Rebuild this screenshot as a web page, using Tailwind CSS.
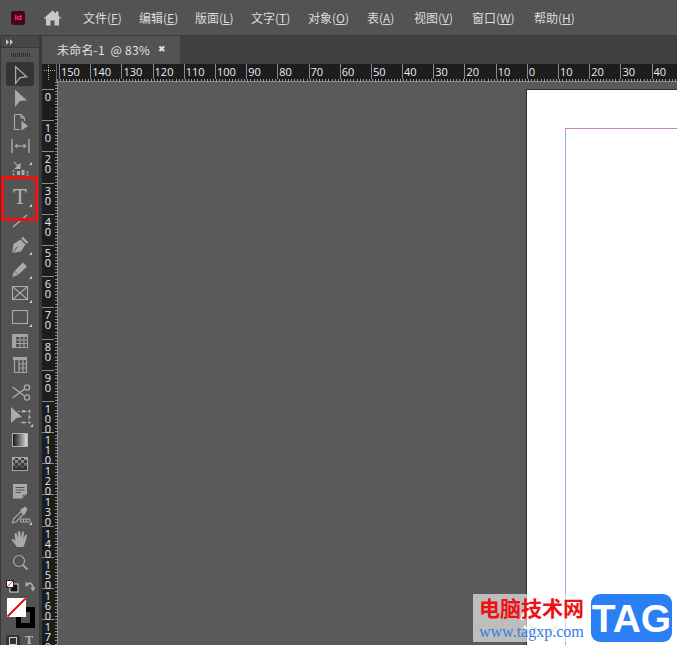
<!DOCTYPE html>
<html lang="zh">

<head>
    <meta charset="utf-8">
    <title>InDesign</title>
    <script src="https://cdn.jsdelivr.net/npm/@tailwindcss/browser@4"></script>
</head>

<body class="bg-[#535353]">
    <div class="relative w-[677px] h-[645px] overflow-hidden flex flex-col font-['Noto_Sans_CJK_SC','Noto_Sans',sans-serif]">
        <!-- Menu bar -->
        <div class="h-[36px] shrink-0 flex items-center bg-[#535353] border-b border-[#3c3c3c] text-[12px] text-[#dcdcdc]">
            <div class="ml-[11px] w-[14px] h-[14px] rounded-[3px] bg-[#49021f] flex items-center justify-center text-[8px] font-bold text-[#ff3a78] font-['Liberation_Sans',sans-serif]">Id</div>
            <svg class="ml-[18px] w-[19px] h-[16px]" viewBox="0 0 19 16">
                <path d="M9.5 0.5 L0.5 8.5 H3 V15.5 H7.5 V10.5 H11.5 V15.5 H16 V8.5 H18.5 L15.5 5.8 V1.5 H13 V3.6 Z" fill="#c8c8c8" />
            </svg>
            <div class="ml-[21px] flex whitespace-nowrap">
                <span class="w-[56px]">文件(<span class="underline">F</span>)</span>
                <span class="w-[56px]">编辑(<span class="underline">E</span>)</span>
                <span class="w-[56px]">版面(<span class="underline">L</span>)</span>
                <span class="w-[57px]">文字(<span class="underline">T</span>)</span>
                <span class="w-[59px]">对象(<span class="underline">O</span>)</span>
                <span class="w-[47px]">表(<span class="underline">A</span>)</span>
                <span class="w-[58px]">视图(<span class="underline">V</span>)</span>
                <span class="w-[62px]">窗口(<span class="underline">W</span>)</span>
                <span>帮助(<span class="underline">H</span>)</span>
            </div>
        </div>

        <div class="flex-1 flex min-h-0">
            <!-- Tools panel -->
            <div class="w-[42px] shrink-0 bg-[#3a3a3a] pl-px pr-[3px] flex flex-col">
                <div class="h-[11px] shrink-0 bg-[#474747] flex items-center pl-[5px]">
                    <svg class="w-[8px] h-[6px]" viewBox="0 0 8 6">
                        <path d="M0 0 L3 3 L0 6 Z M4 0 L7 3 L4 6 Z" fill="#c4c4c4" />
                    </svg>
                </div>
                <div class="flex-1 mt-px bg-[#535353] flex flex-col items-center">
                    <div class="h-[14px] shrink-0 flex items-center">
                        <div class="w-[19px] h-[4px] bg-[repeating-linear-gradient(90deg,#2e2e2e_0,#2e2e2e_1px,transparent_1px,transparent_2px)]"></div>
                    </div>
                    <!-- selection -->
                    <svg class="w-[28px] h-[24px] shrink-0 bg-[#343434] rounded-[3px]" viewBox="0 0 28 24">
                        <path d="M9.6 4.7 L20.7 14.7 L14 15.7 L9.6 21.3 Z" fill="none" stroke="#a8a8a8" stroke-width="1.3" />
                    </svg>
                    <!-- direct selection -->
                    <svg class="w-[28px] h-[24px] shrink-0" viewBox="0 0 28 24">
                        <path d="M9 3.5 L21 14.5 L14 15 L9 21 Z" fill="#aaaaaa" />
                    </svg>
                    <!-- page -->
                    <svg class="w-[28px] h-[24px] shrink-0" viewBox="0 0 28 24">
                        <path d="M8.5 4.5 H15 L18.5 8 V11 M8.5 4.5 V19.5 H14 M15 4.5 V8 H18.5" fill="none" stroke="#aaaaaa" stroke-width="1.2" />
                        <path d="M15.5 11 L22 16 L15.5 20.5 Z" fill="#aaaaaa" />
                    </svg>
                    <!-- gap -->
                    <svg class="w-[28px] h-[24px] shrink-0" viewBox="0 0 28 24">
                        <path d="M6 5 V19 M23 5 V19" stroke="#aaaaaa" stroke-width="1.4" />
                        <path d="M9 12 H20" stroke="#aaaaaa" stroke-width="1.2" />
                        <path d="M8.5 12 L11.5 9.5 V14.5 Z M20.5 12 L17.5 9.5 V14.5 Z" fill="#aaaaaa" />
                    </svg>
                    <!-- content collector -->
                    <svg class="w-[28px] h-[24px] shrink-0" viewBox="0 0 28 24">
                        <path d="M8 4 L13 9 M14 6 V10.5 H9.5 Z" fill="#aaaaaa" stroke="#aaaaaa" stroke-width="1.2" />
                        <path d="M7.5 12 V19.5 H21.5 V12" fill="none" stroke="#aaaaaa" stroke-width="1.6" stroke-dasharray="2 1.2" />
                        <path d="M11 13 H14 V17 H11 Z M15.5 12 H18.5 V17 H15.5 Z" fill="#aaaaaa" />
                        <path d="M26 4 V7 H23 Z" fill="#cccccc" />
                    </svg>
                    <!-- type -->
                    <svg class="mt-[3px] w-[28px] h-[24px] shrink-0" viewBox="0 0 28 24">
                        <text x="14" y="19" text-anchor="middle" font-family="DejaVu Serif" font-size="20" fill="#b4b4b4">T</text>
                        <path d="M26 19 V22 H23 Z" fill="#cccccc" />
                    </svg>
                    <!-- line -->
                    <svg class="w-[28px] h-[24px] shrink-0" viewBox="0 0 28 24">
                        <path d="M7 18 L21 6" stroke="#b0b0b0" stroke-width="1.4" />
                    </svg>
                    <!-- pen -->
                    <svg class="w-[28px] h-[24px] shrink-0" viewBox="0 0 28 24">
                        <path d="M6 20 L7.500 11 L14.500 6.500 L19.500 11.500 L15 18.500 Z" fill="#aaaaaa" />
                        <path d="M6.500 19.500 L11.500 14" stroke="#535353" stroke-width="1" />
                        <path d="M16 4.500 L21.500 10" stroke="#aaaaaa" stroke-width="2.400" />
                        <path d="M26 19 V22 H23 Z" fill="#cccccc" />
                    </svg>
                    <!-- pencil -->
                    <svg class="w-[28px] h-[24px] shrink-0" viewBox="0 0 28 24">
                        <path d="M6 20 L8 14.5 L17 5.5 L21 9.5 L12 18 Z" fill="#aaaaaa" />
                        <path d="M8.5 14 L12.5 18" stroke="#535353" stroke-width="0.8" />
                        <path d="M26 19 V22 H23 Z" fill="#cccccc" />
                    </svg>
                    <!-- rectangle frame -->
                    <svg class="w-[28px] h-[24px] shrink-0" viewBox="0 0 28 24">
                        <path d="M6.5 5.5 H21.5 V18.5 H6.5 Z M6.5 5.5 L21.5 18.5 M21.5 5.5 L6.5 18.5" fill="none" stroke="#aaaaaa" stroke-width="1.1" />
                        <path d="M26 19 V22 H23 Z" fill="#cccccc" />
                    </svg>
                    <!-- rectangle -->
                    <svg class="w-[28px] h-[24px] shrink-0" viewBox="0 0 28 24">
                        <rect x="6.5" y="5.5" width="15" height="13" fill="none" stroke="#aaaaaa" stroke-width="1.1" />
                        <path d="M26 19 V22 H23 Z" fill="#cccccc" />
                    </svg>
                    <!-- table -->
                    <svg class="w-[28px] h-[24px] shrink-0" viewBox="0 0 28 24">
                        <path d="M6 5 H22 V8 H6 Z M6 8 H10 V19 H6 Z" fill="#a4a4a4" />
                        <path d="M10 11 H22 M10 14.500 H22 M6 18.500 H22 M14 8 V19 M18 8 V19 M21.500 8 V19" fill="none" stroke="#a4a4a4" stroke-width="1" />
                    </svg>
                    <!-- table flow -->
                    <svg class="w-[28px] h-[24px] shrink-0" viewBox="0 0 28 24">
                        <path d="M7 4 H21 V7 H7 Z" fill="#a4a4a4" />
                        <path d="M8.500 7 V20 M13 7 V20 M17 7 V20 M20.500 7 V20 M8.500 19.500 H20.500 M13 11 H20.500 M13 15 H20.500" fill="none" stroke="#a4a4a4" stroke-width="1.2" />
                    </svg>
                    <!-- scissors -->
                    <svg class="mt-[3px] w-[28px] h-[24px] shrink-0" viewBox="0 0 28 24">
                        <circle cx="21" cy="7.500" r="2.600" fill="none" stroke="#aaaaaa" stroke-width="1.3" />
                        <circle cx="21" cy="17.500" r="2.600" fill="none" stroke="#aaaaaa" stroke-width="1.3" />
                        <path d="M6.500 7 L18.500 16 M6.500 18 L18.500 9" stroke="#aaaaaa" stroke-width="1.500" />
                    </svg>
                    <!-- free transform -->
                    <svg class="w-[28px] h-[24px] shrink-0" viewBox="0 0 28 24">
                        <path d="M12 7.500 H23 V18.500 H13" fill="none" stroke="#aaaaaa" stroke-width="1" stroke-dasharray="2 1.500" />
                        <path d="M16 6 H19 V8.500 H16 Z M22.500 6 H24.500 V8.500 H22.500 Z M22.500 12 H24.500 V14 H22.500 Z M22.500 17.500 H24.500 V19.500 H22.500 Z M16.500 17.500 H19 V19.500 H16.500 Z" fill="#aaaaaa" />
                        <path d="M5 3 L16 13 L10.500 14 L5 19 Z" fill="#aaaaaa" />
                        <path d="M27 20 V23 H24 Z" fill="#cccccc" />
                    </svg>
                    <!-- gradient -->
                    <svg class="w-[28px] h-[24px] shrink-0" viewBox="0 0 28 24">
                        <defs>
                            <linearGradient id="grad-swatch">
                                <stop offset="0" stop-color="#111111" />
                                <stop offset="1" stop-color="#e4e4e4" />
                            </linearGradient>
                            <linearGradient id="feather-fade" x1="0" y1="0" x2="0" y2="1">
                                <stop offset="0" stop-color="#535353" stop-opacity="0" />
                                <stop offset="1" stop-color="#222222" stop-opacity="0.9" />
                            </linearGradient>
                            <pattern id="checker" width="6" height="6" patternUnits="userSpaceOnUse" x="6" y="5">
                                <rect width="6" height="6" fill="#3c3c3c" />
                                <rect width="3" height="3" fill="#a0a0a0" />
                                <rect x="3" y="3" width="3" height="3" fill="#a0a0a0" />
                            </pattern>
                        </defs>
                        <rect x="6.500" y="5.500" width="15" height="13" fill="url(#grad-swatch)" stroke="#b0b0b0" stroke-width="1" />
                    </svg>
                    <!-- gradient feather -->
                    <svg class="w-[28px] h-[24px] shrink-0" viewBox="0 0 28 24">
                        <rect x="6.500" y="5.500" width="15" height="13" fill="url(#checker)" stroke="#a8a8a8" stroke-width="1" />
                        <rect x="7" y="6" width="14" height="12" fill="url(#feather-fade)" />
                    </svg>
                    <!-- note -->
                    <svg class="mt-[3px] w-[28px] h-[24px] shrink-0" viewBox="0 0 28 24">
                        <path d="M7 5 H21 V15 L16 19.500 H7 Z" fill="#aaaaaa" />
                        <path d="M9.500 8.500 H18.500 M9.500 11 H18.500 M9.500 13.500 H15" stroke="#535353" stroke-width="1" />
                        <path d="M17 19 V16 H20.500" fill="none" stroke="#535353" stroke-width="0.8" />
                    </svg>
                    <!-- eyedropper -->
                    <svg class="w-[28px] h-[24px] shrink-0" viewBox="0 0 28 24">
                        <path d="M6.500 20 L7.500 16 L15 8.500 L17.500 11 L10 19 Z" fill="none" stroke="#aaaaaa" stroke-width="1.100" />
                        <path d="M14 7 L19 3.500 L21.500 6 L18.500 12 Z" fill="#aaaaaa" />
                        <path d="M14.500 16 H24 V19 H14.500 Z" fill="none" stroke="#aaaaaa" stroke-width="1" />
                        <path d="M17.500 16 V19 M20.500 16 V19" stroke="#aaaaaa" stroke-width="1" />
                        <path d="M26 19 V22 H23 Z" fill="#cccccc" />
                    </svg>
                    <!-- hand -->
                    <svg class="w-[28px] h-[24px] shrink-0" viewBox="0 0 28 24">
                        <path d="M11 20 L6 13.500 C5.500 12 7 11.500 8 12.500 L9.500 14 L8.500 7 C8.500 5.500 10.500 5.500 10.800 7 L11.800 11 L12 5 C12.300 3.500 14 3.500 14.300 5 L14.800 11 L16 5.500 C16.500 4 18.200 4.500 18 6 L17.300 12 L19.300 8 C20 7 21.500 7.500 21 9 L19 16 L17.500 20 Z" fill="#aaaaaa" />
                    </svg>
                    <!-- zoom -->
                    <svg class="w-[28px] h-[24px] shrink-0" viewBox="0 0 28 24">
                        <circle cx="13" cy="10" r="5.500" fill="none" stroke="#aaaaaa" stroke-width="1.200" />
                        <path d="M17 14 L21.500 18.500" stroke="#aaaaaa" stroke-width="1.800" />
                    </svg>
                    <!-- fill and stroke -->
                    <svg class="w-[37px] h-[57px] shrink-0" viewBox="0 0 37 57">
                        <rect x="8" y="9" width="8" height="8" fill="#111111" stroke="#dddddd" stroke-width="1" />
                        <rect x="4.500" y="5.500" width="7" height="7" fill="#ffffff" stroke="#222222" stroke-width="1" />
                        <path d="M5 12 L11 6" stroke="#e83030" stroke-width="1" />
                        <path d="M24 10 C27 6.500 30.500 8 31 13" fill="none" stroke="#aaaaaa" stroke-width="1.600" />
                        <path d="M23.500 6.500 V12 L27.500 10 Z M28 12.500 H33.500 L31 16.500 Z" fill="#aaaaaa" />
                        <path d="M16.500 34.500 H30.500 V50.500 H16.500 Z" fill="none" stroke="#000000" stroke-width="5" />
                        <rect x="5" y="23" width="19" height="19" fill="#ffffff" />
                        <path d="M5.500 41.500 L23.500 23.500" stroke="#f00000" stroke-width="1.800" />
                    </svg>
                    <!-- frame / text mode -->
                    <div class="mt-[3px] w-full flex items-start pl-[5px] gap-[5px]">
                        <div class="w-[14px] h-[10px] rounded-t-[2px] bg-[#333333] flex justify-center pt-[2px]">
                            <div class="w-[8px] h-[8px] shrink-0 border border-[#d0d0d0]"></div>
                        </div>
                        <span class="text-[11px] leading-[10px] pt-[1px] font-bold text-[#b0b0b0] font-['DejaVu_Serif',serif]">T</span>
                    </div>
                </div>
            </div>

            <div class="flex-1 min-w-0 flex flex-col">
                <!-- Document tab -->
                <div class="h-[28px] shrink-0 bg-[#404040] flex">
                    <div class="w-[138px] bg-[#535353] pl-[15px] flex items-center text-[12px] tracking-[0.2px] text-[#e0e0e0] whitespace-pre">
                        <span>未命名-1  @ 83%</span>
                        <span class="ml-[8px] text-[9px] font-['DejaVu_Sans',sans-serif]">✖</span>
                    </div>
                </div>

                <!-- Horizontal ruler -->
                <div class="h-[18px] shrink-0 flex bg-[#1d1d1d] text-[11px] leading-[16px] text-[#e4ecf6] font-['Open_Sans',sans-serif]">
                    <div class="w-[15px] shrink-0 relative border-r border-[#6a6a6a]">
                        <div class="absolute left-[2px] right-[1px] top-[6px] border-t border-dotted border-[#aaaaaa]"></div>
                        <div class="absolute left-[6px] top-[1px] bottom-[2px] border-l border-dotted border-[#aaaaaa]"></div>
                    </div>
                    <div class="flex-1 min-w-0 overflow-hidden flex flex-col">
                        <div class="h-[15px] pl-[2px] flex">
                            <div class="w-[31.2px] shrink-0 border-l border-[#8a8a8a] pl-[1px]">150</div>
                            <div class="w-[31.2px] shrink-0 border-l border-[#8a8a8a] pl-[1px]">140</div>
                            <div class="w-[31.2px] shrink-0 border-l border-[#8a8a8a] pl-[1px]">130</div>
                            <div class="w-[31.2px] shrink-0 border-l border-[#8a8a8a] pl-[1px]">120</div>
                            <div class="w-[31.2px] shrink-0 border-l border-[#8a8a8a] pl-[1px]">110</div>
                            <div class="w-[31.2px] shrink-0 border-l border-[#8a8a8a] pl-[1px]">100</div>
                            <div class="w-[31.2px] shrink-0 border-l border-[#8a8a8a] pl-[1px]">90</div>
                            <div class="w-[31.2px] shrink-0 border-l border-[#8a8a8a] pl-[1px]">80</div>
                            <div class="w-[31.2px] shrink-0 border-l border-[#8a8a8a] pl-[1px]">70</div>
                            <div class="w-[31.2px] shrink-0 border-l border-[#8a8a8a] pl-[1px]">60</div>
                            <div class="w-[31.2px] shrink-0 border-l border-[#8a8a8a] pl-[1px]">50</div>
                            <div class="w-[31.2px] shrink-0 border-l border-[#8a8a8a] pl-[1px]">40</div>
                            <div class="w-[31.2px] shrink-0 border-l border-[#8a8a8a] pl-[1px]">30</div>
                            <div class="w-[31.2px] shrink-0 border-l border-[#8a8a8a] pl-[1px]">20</div>
                            <div class="w-[31.2px] shrink-0 border-l border-[#8a8a8a] pl-[1px]">10</div>
                            <div class="w-[31.2px] shrink-0 border-l border-[#8a8a8a] pl-[1px]">0</div>
                            <div class="w-[31.2px] shrink-0 border-l border-[#8a8a8a] pl-[1px]">10</div>
                            <div class="w-[31.2px] shrink-0 border-l border-[#8a8a8a] pl-[1px]">20</div>
                            <div class="w-[31.2px] shrink-0 border-l border-[#8a8a8a] pl-[1px]">30</div>
                            <div class="w-[31.2px] shrink-0 border-l border-[#8a8a8a] pl-[1px]">40</div>
                        </div>
                        <div class="h-[2px] bg-[repeating-linear-gradient(90deg,#9a9a9a_0,#9a9a9a_1px,transparent_1px,transparent_3.12px)]"></div>
                        <div class="h-px bg-[#8c8c8c]"></div>
                    </div>
                </div>

                <div class="flex-1 min-h-0 flex">
                    <!-- Vertical ruler -->
                    <div class="w-[16px] shrink-0 overflow-hidden flex bg-[#1d1d1d] border-r border-[#8c8c8c] text-[11px] leading-[10px] text-[#e4ecf6] font-['Open_Sans',sans-serif]">
                        <div class="w-[13px] pt-[7px] pr-px shrink-0 text-center">
                            <div class="h-[31.2px] border-t border-[#8a8a8a] pt-[2px]">0</div>
                            <div class="h-[31.2px] border-t border-[#8a8a8a] pt-[2px]">1<br>0</div>
                            <div class="h-[31.2px] border-t border-[#8a8a8a] pt-[2px]">2<br>0</div>
                            <div class="h-[31.2px] border-t border-[#8a8a8a] pt-[2px]">3<br>0</div>
                            <div class="h-[31.2px] border-t border-[#8a8a8a] pt-[2px]">4<br>0</div>
                            <div class="h-[31.2px] border-t border-[#8a8a8a] pt-[2px]">5<br>0</div>
                            <div class="h-[31.2px] border-t border-[#8a8a8a] pt-[2px]">6<br>0</div>
                            <div class="h-[31.2px] border-t border-[#8a8a8a] pt-[2px]">7<br>0</div>
                            <div class="h-[31.2px] border-t border-[#8a8a8a] pt-[2px]">8<br>0</div>
                            <div class="h-[31.2px] border-t border-[#8a8a8a] pt-[2px]">9<br>0</div>
                            <div class="h-[31.2px] border-t border-[#8a8a8a] pt-[2px]">1<br>0<br>0</div>
                            <div class="h-[31.2px] border-t border-[#8a8a8a] pt-[2px]">1<br>1<br>0</div>
                            <div class="h-[31.2px] border-t border-[#8a8a8a] pt-[2px]">1<br>2<br>0</div>
                            <div class="h-[31.2px] border-t border-[#8a8a8a] pt-[2px]">1<br>3<br>0</div>
                            <div class="h-[31.2px] border-t border-[#8a8a8a] pt-[2px]">1<br>4<br>0</div>
                            <div class="h-[31.2px] border-t border-[#8a8a8a] pt-[2px]">1<br>5<br>0</div>
                            <div class="h-[31.2px] border-t border-[#8a8a8a] pt-[2px]">1<br>6<br>0</div>
                            <div class="h-[31.2px] border-t border-[#8a8a8a] pt-[2px]">1<br>7<br>0</div>
                        </div>
                        <div class="flex-1 bg-[repeating-linear-gradient(180deg,#8a8a8a_0,#8a8a8a_1px,transparent_1px,transparent_3.12px)]"></div>
                    </div>

                    <!-- Pasteboard and page -->
                    <div class="flex-1 min-w-0 bg-[#5a5a5a] pt-[7px] pl-[468px] flex">
                        <div class="flex-1 bg-white border-l border-t border-[#2e2e2e] pl-[37px] pt-[38px] flex">
                            <div class="flex-1 ml-px border-l border-t border-l-[#9f9ff0] border-t-[#d47cc4]"></div>
                        </div>
                    </div>
                </div>
            </div>
        </div>

        <!-- Red highlight around the type tool -->
        <div class="absolute left-[1px] top-[176px] w-[37px] h-[45px] border-[3px] border-[#f01010]"></div>

        <!-- Site watermark -->
        <svg class="absolute left-[516px] top-[596px] w-[50px] h-[44px]" viewBox="0 0 50 44">
            <path d="M6 24 C8 8 30 2 44 8 C30 6 16 12 14 24" fill="none" stroke="#cfe6f4" stroke-width="3" />
            <path d="M8 30 C16 42 34 40 42 30 C32 36 20 36 14 28" fill="none" stroke="#d3ecd8" stroke-width="3" />
        </svg>
        <div class="absolute left-[473px] top-[594px] w-[115px] h-[48px] bg-white/60 pl-[6px] font-bold">
            <div class="text-[21px] leading-[26px] text-[#ee1111] font-['Noto_Sans_CJK_SC',sans-serif] whitespace-nowrap">电脑技术网</div>
            <div class="mt-[4px] text-[16px] leading-[15px] font-normal text-[#2f7de6] font-['Liberation_Serif',serif] whitespace-nowrap">www.tagxp.com</div>
        </div>
        <div class="absolute left-[591px] top-[594px] w-[81px] h-[48px] rounded-[9px] bg-[#2a7ff5] flex items-center justify-center text-[39px] leading-none font-bold text-white font-['Liberation_Sans',sans-serif]">TAG</div>
    </div>
</body>

</html>
